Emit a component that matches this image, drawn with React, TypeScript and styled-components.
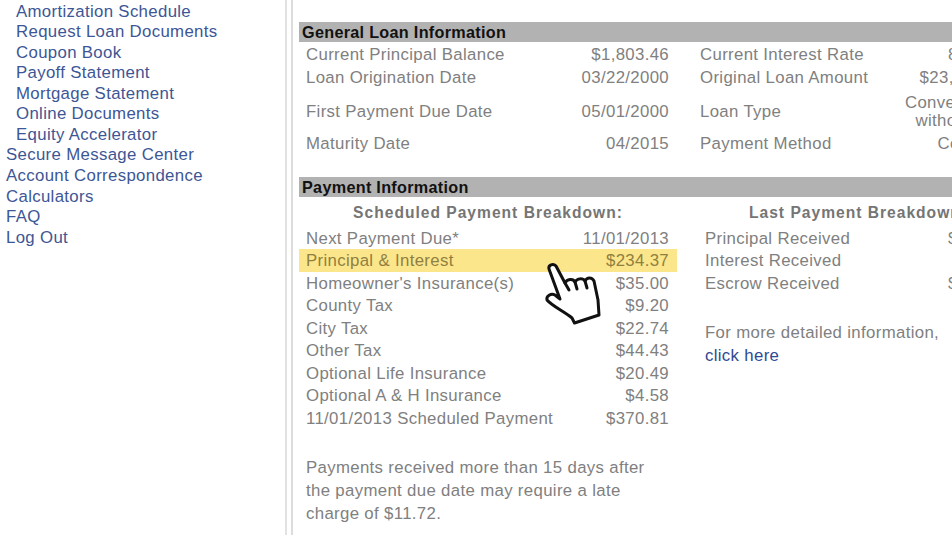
import React from 'react';
import styled, { createGlobalStyle } from 'styled-components';

const GlobalStyle = createGlobalStyle`
  html, body {
    margin: 0;
    padding: 0;
    height: 535px;
    overflow: hidden;
    background: #fff;
  }
  body {
    font-family: "Liberation Sans", Arial, sans-serif;
    letter-spacing: 0.34px;
  }
`;

const Page = styled.div`
  position: relative;
  display: flex;
  width: 952px;
  height: 535px;
  overflow: hidden;
`;

const Sidebar = styled.nav`
  flex: 0 0 285px;
  padding: 1.6px 0 0 6px;
  box-sizing: border-box;
`;

const NavLink = styled.a<{ $sub?: boolean }>`
  display: block;
  height: 20.55px;
  line-height: 20.55px;
  padding-left: ${(p) => (p.$sub ? '10px' : '0')};
  font-size: 16.8px;
  color: #3d5695;
  white-space: nowrap;
`;

const Main = styled.main`
  flex: 0 0 auto;
  width: 800px;
  padding-left: 4px;
  box-sizing: border-box;
  border-left: 2px solid #e2e2e2;
`;

const Content = styled.div`
  height: 535px;
  padding: 22px 0 0 6px;
  box-sizing: border-box;
  border-left: 2px solid #dcdcdc;
`;

const SectionBar = styled.h2`
  margin: 0;
  height: 20px;
  line-height: 21.5px;
  padding-left: 3px;
  background: #b2b2b2;
  color: #111;
  font-size: 16.2px;
  font-weight: 700;
  letter-spacing: 0.3px;
`;

const InfoGrid = styled.div`
  display: grid;
  grid-template-columns: 370px 338px;
  margin-bottom: 25px;
`;

const InfoRow = styled.div<{ $h: number }>`
  display: contents;
  --row-h: ${(p) => p.$h}px;
`;

const InfoCell = styled.div`
  display: flex;
  align-items: center;
  justify-content: space-between;
  height: var(--row-h);
  padding-top: 2px;
  padding-left: 7px;
  box-sizing: border-box;
  font-size: 16.8px;
  color: #808080;
`;

const InfoCellRight = styled(InfoCell)`
  padding-left: 31px;
`;

const RightValue = styled.span`
  text-align: right;
  line-height: 18px;
  white-space: nowrap;
`;

const Columns = styled.div`
  display: grid;
  grid-template-columns: 378px 362px;
`;

const BreakdownTitle = styled.h3`
  margin: 0;
  height: 30px;
  line-height: 31px;
  text-align: center;
  font-size: 15.6px;
  font-weight: 700;
  letter-spacing: 1px;
  color: #757575;
  white-space: nowrap;
`;

const Breakdown = styled.div`
  display: flex;
  flex-direction: column;
  width: 378px;
`;

const BreakdownRow = styled.div<{ $hi?: boolean }>`
  display: flex;
  justify-content: space-between;
  height: 22.45px;
  line-height: 24.6px;
  padding: 0 8px 0 7px;
  font-size: 16.8px;
  color: ${(p) => (p.$hi ? '#8f8040' : '#808080')};
  background: ${(p) => (p.$hi ? '#fce68c' : 'transparent')};
`;

const LastRows = styled.div`
  width: 321px;
  margin-left: 21px;
`;

const Note = styled.p`
  margin: 28px 0 0 7px;
  font-size: 16.8px;
  line-height: 22.8px;
  color: #808080;
`;

const SideNote = styled(Note)`
  margin: 28px 0 0 28px;
`;

const ClickHere = styled.a`
  color: #2f4a94;
`;

const HandIcon = styled.svg`
  position: absolute;
  left: 540px;
  top: 258px;
  width: 70px;
  height: 70px;
`;

const subLinks = [
  'Amortization Schedule',
  'Request Loan Documents',
  'Coupon Book',
  'Payoff Statement',
  'Mortgage Statement',
  'Online Documents',
  'Equity Accelerator',
];
const topLinks = ['Secure Message Center', 'Account Correspondence', 'Calculators', 'FAQ', 'Log Out'];

const loanInfo = [
  { h: 24, a: ['Current Principal Balance', '$1,803.46'], b: ['Current Interest Rate', '8.000%'] },
  { h: 22, a: ['Loan Origination Date', '03/22/2000'], b: ['Original Loan Amount', '$23,500.00'] },
  { h: 46, a: ['First Payment Due Date', '05/01/2000'], b: ['Loan Type', 'Conventional\nwithout PMI'] },
  { h: 18, a: ['Maturity Date', '04/2015'], b: ['Payment Method', 'Coupons'] },
];

const scheduled = [
  ['Next Payment Due*', '11/01/2013'],
  ['Principal & Interest', '$234.37'],
  ["Homeowner's Insurance(s)", '$35.00'],
  ['County Tax', '$9.20'],
  ['City Tax', '$22.74'],
  ['Other Tax', '$44.43'],
  ['Optional Life Insurance', '$20.49'],
  ['Optional A & H Insurance', '$4.58'],
  ['11/01/2013 Scheduled Payment', '$370.81'],
];

const last = [
  ['Principal Received', '$234.37'],
  ['Interest Received', '$0.00'],
  ['Escrow Received', '$136.44'],
];

export default function App() {
  return (
    <Page>
      <GlobalStyle />
      <Sidebar>
        {subLinks.map((t) => (
          <NavLink key={t} $sub>{t}</NavLink>
        ))}
        {topLinks.map((t) => (
          <NavLink key={t}>{t}</NavLink>
        ))}
      </Sidebar>
      <Main>
        <Content>
          <SectionBar>General Loan Information</SectionBar>
          <InfoGrid>
            {loanInfo.map((r) => (
              <InfoRow key={r.a[0]} $h={r.h}>
                <InfoCell>
                  <span>{r.a[0]}</span>
                  <RightValue>{r.a[1]}</RightValue>
                </InfoCell>
                <InfoCellRight>
                  <span>{r.b[0]}</span>
                  <RightValue>
                    {r.b[1].split('\n').map((l) => (
                      <div key={l}>{l}</div>
                    ))}
                  </RightValue>
                </InfoCellRight>
              </InfoRow>
            ))}
          </InfoGrid>
          <SectionBar>Payment Information</SectionBar>
          <Columns>
            <div>
              <BreakdownTitle>Scheduled Payment Breakdown:</BreakdownTitle>
              <Breakdown>
                {scheduled.map(([k, v], i) => (
                  <BreakdownRow key={k} $hi={i === 1}>
                    <span>{k}</span>
                    <span>{v}</span>
                  </BreakdownRow>
                ))}
              </Breakdown>
              <Note>
                Payments received more than 15 days after
                <br />
                the payment due date may require a late
                <br />
                charge of $11.72.
              </Note>
            </div>
            <div>
              <BreakdownTitle>Last Payment Breakdown:</BreakdownTitle>
              <LastRows>
                {last.map(([k, v]) => (
                  <BreakdownRow key={k}>
                    <span>{k}</span>
                    <span>{v}</span>
                  </BreakdownRow>
                ))}
              </LastRows>
              <SideNote>
                For more detailed information,
                <br />
                <ClickHere>click here</ClickHere>
              </SideNote>
            </div>
          </Columns>
        </Content>
      </Main>
      <HandIcon viewBox="0 0 70 70" fill="#fff" stroke="#111" strokeWidth="3" strokeLinejoin="round" strokeLinecap="round">
        <path d="M9 11 C8 7 13 5 16 8 L25 25 C27 21 33 20 35 24 C37 20 43 20 45 23 C47 19 52 19 54 23 L58 42 L59 57 L34.5 65 L32 60 C25 54 12 48 7 42 C6 38 11 35 15 37 L20 41 Z" />
        <path d="M25 25 L29 32 M35 24 L37 31 M45 23 L47 30" fill="none" />
      </HandIcon>
    </Page>
  );
}
